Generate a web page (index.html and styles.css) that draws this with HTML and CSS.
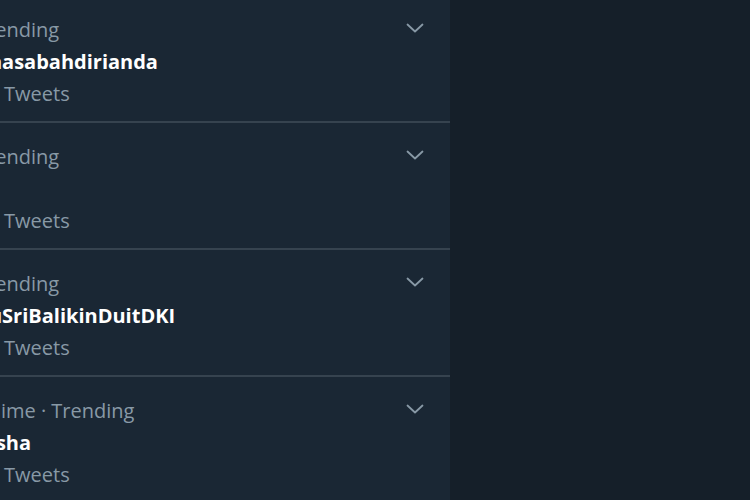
FILE: index.html
```html
<!DOCTYPE html>
<html>
<head>
<meta charset="utf-8">
<link rel="stylesheet" href="styles.css">
</head>
<body>
<div class="page">
  <section class="panel">
    <div class="list">
      <div class="trend">
        <div class="text">
          <div class="meta">Trending</div>
          <div class="title">#nasabahdirianda</div>
          <div class="count">12 Tweets</div>
        </div>
        <svg class="chev" viewBox="0 0 18 10" width="18" height="10"><path d="M1.5 1.5 L9 8.5 L16.5 1.5" fill="none" stroke="#8899a6" stroke-width="1.8" stroke-linecap="round" stroke-linejoin="round"/></svg>
      </div>
      <div class="trend">
        <div class="text">
          <div class="meta">Trending</div>
          <div class="title"></div>
          <div class="count">15 Tweets</div>
        </div>
        <svg class="chev" viewBox="0 0 18 10" width="18" height="10"><path d="M1.5 1.5 L9 8.5 L16.5 1.5" fill="none" stroke="#8899a6" stroke-width="1.8" stroke-linecap="round" stroke-linejoin="round"/></svg>
      </div>
      <div class="trend">
        <div class="text">
          <div class="meta">Trending</div>
          <div class="title">#uSriBalikinDuitDKI</div>
          <div class="count">18 Tweets</div>
        </div>
        <svg class="chev" viewBox="0 0 18 10" width="18" height="10"><path d="M1.5 1.5 L9 8.5 L16.5 1.5" fill="none" stroke="#8899a6" stroke-width="1.8" stroke-linecap="round" stroke-linejoin="round"/></svg>
      </div>
      <div class="trend">
        <div class="text">
          <div class="meta">Anime · Trending</div>
          <div class="title">Aisha</div>
          <div class="count">14 Tweets</div>
        </div>
        <svg class="chev" viewBox="0 0 18 10" width="18" height="10"><path d="M1.5 1.5 L9 8.5 L16.5 1.5" fill="none" stroke="#8899a6" stroke-width="1.8" stroke-linecap="round" stroke-linejoin="round"/></svg>
      </div>
    </div>
  </section>
  <div class="side"></div>
</div>
</body>
</html>
```
FILE: styles.css
```css
html, body {
  margin: 0;
  padding: 0;
  background: #151f29;
  height: 100%;
  overflow: hidden;
}
.page {
  display: flex;
  height: 500px;
  font-family: "Open Sans", "Noto Sans", sans-serif;
}
.panel {
  width: 450px;
  flex: none;
  background: #1a2734;
  overflow: hidden;
}
.side {
  flex: 1;
  background: #151f29;
}
.list {
  margin-top: -4px;
}
.trend {
  height: 125px;
  border-bottom: 2px solid #36434f;
  display: flex;
  justify-content: space-between;
  align-items: flex-start;
  padding-right: 26px;
}
.text {
  margin-left: -24px;
  padding-top: 18px;
  font-size: 20px;
  white-space: nowrap;
}
.meta, .count {
  color: #8899a6;
  height: 32px;
  line-height: 32px;
}
.title {
  color: #ffffff;
  font-weight: 700;
  height: 31px;
  line-height: 31px;
}
.count {
  height: 34px;
  line-height: 34px;
}
.chev {
  margin-top: 27px;
}
```
